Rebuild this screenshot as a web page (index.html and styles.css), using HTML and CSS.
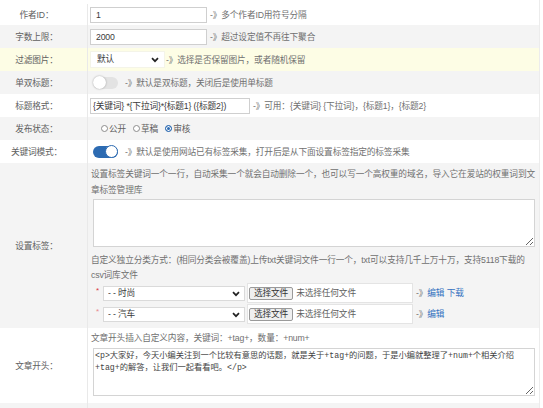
FILE: index.html
```html
<!DOCTYPE html>
<html lang="zh-CN">
<head>
<meta charset="utf-8">
<title>采集设置</title>
<link rel="stylesheet" href="styles.css">
</head>
<body>
<div class="form">
  <div class="row first">
    <div class="label">作者ID：</div>
    <div class="field">
      <input class="text w117" type="text" value="1">
      <span class="hint">-》多个作者ID用符号分隔</span>
    </div>
  </div>
  <div class="row line gray">
    <div class="label">字数上限：</div>
    <div class="field">
      <input class="text w117" type="text" value="2000">
      <span class="hint">-》超过设定值不再往下聚合</span>
    </div>
  </div>
  <div class="row line yellow">
    <div class="label">过滤图片：</div>
    <div class="field">
      <span class="sel w75 plain">
        <select><option>默认</option></select>
        <svg class="chev" width="8" height="6" viewBox="0 0 8 6"><path d="M1 1.2 L4 4.2 L7 1.2" fill="none" stroke="#222" stroke-width="1.7"/></svg>
      </span>
      <span class="hint tight">-》选择是否保留图片，或者随机保留</span>
    </div>
  </div>
  <div class="row line gray">
    <div class="label">单双标题：</div>
    <div class="field">
      <span class="switch"><span class="knob"></span></span>
      <span class="hint sw">-》默认是双标题，关闭后是使用单标题</span>
    </div>
  </div>
  <div class="row line">
    <div class="label">标题格式：</div>
    <div class="field">
      <input class="text w160" type="text" value="{关键词} *{下拉词}*{标题1} ({标题2})">
      <span class="hint">-》可用：{关键词} {下拉词}，{标题1}，{标题2}</span>
    </div>
  </div>
  <div class="row line gray">
    <div class="label">发布状态：</div>
    <div class="field">
      <label class="opt first-opt"><input class="radio" type="radio" name="st">公开</label>
      <label class="opt"><input class="radio" type="radio" name="st">草稿</label>
      <label class="opt"><input class="radio" type="radio" name="st" checked>审核</label>
    </div>
  </div>
  <div class="row line">
    <div class="label">关键词模式：</div>
    <div class="field">
      <span class="switch on"><span class="knob"></span></span>
      <span class="hint sw">-》默认是使用网站已有标签采集，打开后是从下面设置标签指定的标签采集</span>
    </div>
  </div>
  <div class="row gray">
    <div class="label">设置标签：</div>
    <div class="field block tags">
      <p class="para">设置标签关键词一个一行，自动采集一个就会自动删除一个，也可以写一个高权重的域名，导入它在爱站的权重词到文<br>章标签管理库</p>
      <textarea class="area"></textarea>
      <p class="para gap">自定义独立分类方式：(相同分类会被覆盖)上传txt关键词文件一行一个，txt可以支持几千上万十万，支持5118下载的<br>csv词库文件</p>
      <div class="upload">
        <span class="star">*</span>
        <span class="sel w142">
          <select><option>- - 时尚</option></select>
          <svg class="chev" width="8" height="6" viewBox="0 0 8 6"><path d="M1 1.2 L4 4.2 L7 1.2" fill="none" stroke="#222" stroke-width="1.7"/></svg>
        </span>
        <span class="file"><button class="pick" type="button">选择文件</button><span class="none">未选择任何文件</span></span>
        <span class="hint">-》<a class="link">编辑</a> <a class="link">下载</a></span>
      </div>
      <div class="upload next">
        <span class="star light">*</span>
        <span class="sel w142">
          <select><option>- - 汽车</option></select>
          <svg class="chev" width="8" height="6" viewBox="0 0 8 6"><path d="M1 1.2 L4 4.2 L7 1.2" fill="none" stroke="#222" stroke-width="1.7"/></svg>
        </span>
        <span class="file"><button class="pick" type="button">选择文件</button><span class="none">未选择任何文件</span></span>
        <span class="hint">-》<a class="link">编辑</a></span>
      </div>
    </div>
  </div>
  <div class="row">
    <div class="label">文章开头：</div>
    <div class="field block opening">
      <p class="para">文章开头插入自定义内容，关键词：+tag+，数量：+num+</p>
      <textarea class="area code">&lt;p&gt;大家好，今天小编关注到一个比较有意思的话题，就是关于+tag+的问题，于是小编就整理了+num+个相关介绍+tag+的解答，让我们一起看看吧。&lt;/p&gt;</textarea>
    </div>
  </div>
  <div class="row tail gray">
    <div class="label"></div>
    <div class="field"></div>
  </div>
</div>
</body>
</html>
```
FILE: styles.css
```css
* { box-sizing: border-box; }
html, body { margin: 0; padding: 0; background: #fff; }
body {
  font-family: "Liberation Sans", "Noto Sans CJK SC", sans-serif;
  font-size: 8.7px;
  line-height: 16px;
  letter-spacing: -0.15px;
  color: #707070;
}
.form {
  width: 540px;
  border-right: 1px solid #ececec;
}
.row {
  display: grid;
  grid-template-columns: 88px 1fr;
  background: #fff;
}
.row.gray { background: #f4f4f4; }
.row.yellow { background: #fdfde5; }
.row.first { height: 25px; padding-top: 4px; }
.row.line { height: 23px; }
.row.tail { height: 8px; }
.label {
  display: flex;
  align-items: center;
  justify-content: center;
  padding-right: 14px;
  border-right: 1px solid #e9e9e9;
  color: #606060;
}
.field {
  display: flex;
  align-items: center;
  padding-left: 2px;
  min-width: 0;
}
.field.block {
  display: block;
  padding-left: 3px;
}
.text {
  height: 16px;
  border: 1px solid #cfcfcf;
  background: #fff;
  padding: 0 5px;
  font: inherit;
  letter-spacing: -0.15px;
  color: #3a3a3a;
  outline: none;
}
.w117 { width: 117px; }
.w160 { width: 160px; padding-left: 2px; }
.hint { margin-left: 3px; white-space: nowrap; color: #707070; }
.hint.tight { margin-left: 1px; }
.hint.sw { margin-left: 7px; }
.sel {
  position: relative;
  display: inline-flex;
}
.sel select {
  appearance: none;
  -webkit-appearance: none;
  width: 100%;
  height: 15px;
  border: 1px solid #dadada;
  border-radius: 0;
  background: #fff;
  font: inherit;
  letter-spacing: -0.15px;
  line-height: 13px;
  color: #3a3a3a;
  padding: 0 0 0 4px;
  outline: none;
}
.sel.plain select {
  height: 17px;
  border-color: #f4f4e8;
  padding-left: 6px;
}
.w75 { width: 75px; }
.w142 { width: 142px; }
.chev {
  position: absolute;
  right: 5px;
  top: 5px;
  pointer-events: none;
}
.plain .chev { top: 6px; right: 6px; }
.switch {
  display: flex;
  justify-content: flex-start;
  align-items: center;
  width: 25px;
  height: 12px;
  margin-left: 3px;
  border-radius: 6px;
  background: #e3e3e3;
}
.switch .knob {
  width: 13px;
  height: 13px;
  border-radius: 50%;
  background: #fff;
  box-shadow: 0 0 2px rgba(0, 0, 0, 0.35);
}
.switch.on {
  justify-content: flex-end;
  background: #2d6bb2;
}
.switch.on .knob {
  border: 1px solid #2d6bb2;
  box-shadow: none;
}
.opt {
  display: inline-flex;
  align-items: center;
  margin-left: 7px;
  color: #606060;
}
.opt.first-opt { margin-left: 11px; }
.radio {
  appearance: none;
  -webkit-appearance: none;
  width: 7px;
  height: 7px;
  margin: 0 1px 0 0;
  border: 1px solid #8c8c8c;
  border-radius: 50%;
  background: #fff;
}
.radio:checked {
  background: #2d6bb2;
  border-color: #2d6bb2;
  box-shadow: inset 0 0 0 1px #fff;
}
.para { margin: 0; }
.tags { padding-top: 3px; padding-bottom: 4px; }
.opening { padding-top: 2px; padding-bottom: 7px; }
.area {
  display: block;
  width: 442px;
  height: 48px;
  margin: 1px 0 0 2px;
  border: 1px solid #d4d4d4;
  background: #fff;
  padding: 1px;
  font: inherit;
  outline: none;
}
.area.code {
  margin-top: 2px;
  font-family: "Liberation Mono", "Noto Sans CJK SC", monospace;
  font-size: 8.25px;
  line-height: 12px;
  color: #444;
}
.para.gap { margin-top: 6px; line-height: 15px; }
.upload {
  display: flex;
  align-items: center;
  height: 20px;
}
.upload.next { margin-top: 1px; }
.star {
  width: 5px;
  margin-left: 5px;
  margin-right: 2px;
  color: #d9363e;
  font-size: 8px;
  line-height: 8px;
  align-self: flex-start;
  margin-top: 4px;
}
.star.light { color: #e88a8e; }
.file {
  display: flex;
  align-items: center;
  width: 166px;
  height: 20px;
  margin-left: 2px;
  padding-left: 1px;
  border: 1px solid #e4e4e4;
  background: #fff;
}
.pick {
  height: 13px;
  padding: 0 4px;
  border: 1px solid #9a9a9a;
  border-radius: 2px;
  background: #efefef;
  font: inherit;
  letter-spacing: -0.15px;
  line-height: 11px;
  color: #333;
}
.none { margin-left: 3px; color: #606060; }
.link { color: #3571c0; text-decoration: none; }
```
